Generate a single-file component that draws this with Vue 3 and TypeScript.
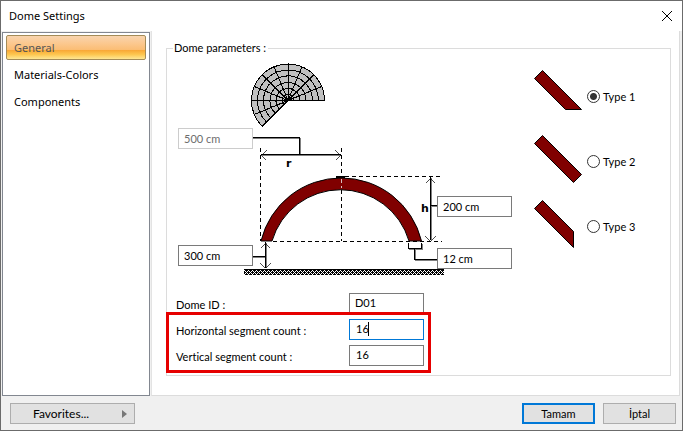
<script setup lang="ts">
import { ref } from 'vue'

const pages = ['General', 'Materials-Colors', 'Components']
const activePage = ref('General')

const radius = ref('500 cm')
const elevation = ref('300 cm')
const height = ref('200 cm')
const thickness = ref('12 cm')
const domeId = ref('D01')
const horizontal = ref('16')
const vertical = ref('16')

const types = [
  { id: 1, label: 'Type 1', points: '0.5,8.5 8.5,0.5 47.5,39.5 31.5,39.5' },
  { id: 2, label: 'Type 2', points: '0.5,8.5 8.5,0.5 47.5,39.5 39.5,47.5' },
  { id: 3, label: 'Type 3', points: '0.5,8.5 8.5,0.5 39.5,31.5 39.5,47.5' },
]
const domeType = ref(1)

const cx = 288
const cy = 100.5
const rings = [6, 12, 18, 24.5, 30.5, 36.5]
const point = (r: number, deg: number): string => {
  const a = (deg * Math.PI) / 180
  return `${(cx + r * Math.cos(a)).toFixed(2)} ${(cy - r * Math.sin(a)).toFixed(2)}`
}
const arc = (r: number): string => `M${point(r, 0)}A${r} ${r} 0 1 0 ${point(r, 225)}`
const fan = `${arc(36.5)}L${cx} ${cy}Z`
const spokes = Array.from({ length: 11 }, (_, i) => `M${cx} ${cy}L${point(36.5, i * 22.5)}`).join('')
</script>

<template>
  <main class="dialog">
    <header class="titlebar">
      <h1>Dome Settings</h1>
      <button class="close" type="button" aria-label="Close">
        <svg width="12" height="12" viewBox="0 0 12 12"><path d="M1 1L11 11M11 1L1 11" /></svg>
      </button>
    </header>

    <div class="body">
      <nav class="sidebar">
        <button
          v-for="page in pages"
          :key="page"
          type="button"
          class="page"
          :class="{ active: page === activePage }"
          @click="activePage = page"
        >{{ page }}</button>
      </nav>

      <section class="panel">
        <fieldset class="group">
          <legend>Dome parameters :</legend>
          <div class="upper">
            <div class="diagram">
              <svg class="drawing" width="353" height="223" viewBox="167 57 353 223" aria-hidden="true">
                <defs>
                  <pattern id="hatch" x="244" y="269" width="4" height="6" patternUnits="userSpaceOnUse">
                    <rect width="4" height="6" fill="#000" />
                    <path
                      d="M0 1h1v1h-1zM1 2h1v1h-1zM3 2h1v1h-1zM2 3h1v1h-1zM1 4h1v1h-1zM3 4h1v1h-1zM0 5h1v1h-1z"
                      fill="#fff"
                    />
                  </pattern>
                </defs>
                <path :d="fan" fill="#c0c0c0" />
                <path v-for="r in rings" :key="r" :d="arc(r)" class="line" />
                <path :d="spokes" class="line" />

                <g class="shadow">
                  <path d="M253 138.5H299M300.5 138V154M262 155.5H341" />
                  <path d="M253 257.5H265M266.5 243V268M431.5 178V240M432 206.5H437" />
                  <path d="M409 249.5H422M422.5 244V250M415.5 250V259M415 260.5H437" />
                </g>
                <path class="dash" d="M260.5 148V241M341.5 148V241M345 176.5H442M273 241.5H442" />
                <path d="M261 241A82.6 82.6 0 0 1 421.5 241H409A71.4 71.4 0 0 0 272 241Z" class="arch" />
                <path class="line" d="M336 176.5H345M336 177.5H345" />
                <path d="M341.5 179V188" stroke="#d8c0c0" stroke-dasharray="4 3" />
                <g class="line">
                  <path d="M253 137.5H299.5V154M261 154.5H341M253 256.5H265.5M265.5 242V268" />
                  <path d="M430.5 177V240M430 205.5H437M408.5 243V248.5H421.5V243M414.5 249V259.5H437" />
                </g>
                <g class="line tips">
                  <path d="M266.5 149.5L261.5 154.5L266.5 159.5M335.5 149.5L340.5 154.5L335.5 159.5" />
                  <path d="M260.5 247.5L265.5 242.5L270.5 247.5M260.5 262.5L265.5 267.5L270.5 262.5" />
                  <path d="M425.5 182.5L430.5 177.5L435.5 182.5M425.5 235.5L430.5 240.5L435.5 235.5" />
                </g>
                <rect x="244" y="269" width="200" height="6" fill="url(#hatch)" />
                <text x="286" y="167">r</text>
                <text x="421" y="212">h</text>
              </svg>
              <input v-model="radius" class="field radius" aria-label="Radius" disabled />
              <input v-model="elevation" class="field elevation" aria-label="Elevation" />
              <input v-model="height" class="field height" aria-label="Height" />
              <input v-model="thickness" class="field thickness" aria-label="Thickness" />
            </div>

            <div class="types">
              <label v-for="t in types" :key="t.id" class="type">
                <svg width="48" height="48" viewBox="0 0 48 48" aria-hidden="true">
                  <polygon :points="t.points" class="arch" />
                </svg>
                <input v-model="domeType" type="radio" name="dome-type" :value="t.id" />
                <span>{{ t.label }}</span>
              </label>
            </div>
          </div>

          <div class="form">
            <label for="dome-id">Dome ID :</label>
            <input id="dome-id" v-model="domeId" class="field" />
            <label for="horizontal">Horizontal segment count :</label>
            <div class="editing">
              <input id="horizontal" v-model="horizontal" class="field current" />
              <i class="caret"></i>
            </div>
            <label for="vertical">Vertical segment count :</label>
            <input id="vertical" v-model="vertical" class="field count" />
            <div class="highlight"></div>
          </div>
        </fieldset>
      </section>
    </div>

    <footer class="footer">
      <button type="button" class="btn favorites">
        <span>Favorites...</span>
        <svg width="5" height="8" viewBox="0 0 5 8"><path d="M0 0L5 4L0 8Z" /></svg>
      </button>
      <button type="button" class="btn primary">Tamam</button>
      <button type="button" class="btn">İptal</button>
    </footer>
  </main>
</template>

<style>
body {
  margin: 0;
}
</style>

<style scoped>
.dialog {
  box-sizing: border-box;
  display: flex;
  flex-direction: column;
  min-height: 100vh;
  border: 1px solid #6b6b6b;
  background: #f0f0f0;
  color: #000;
  font: 11px/16px Lato, "DejaVu Sans Condensed", sans-serif;
  font-variant-ligatures: none;
}
button,
input {
  box-sizing: border-box;
  margin: 0;
  color: inherit;
  font: inherit;
}
.titlebar {
  display: flex;
  align-items: center;
  justify-content: space-between;
  height: 30px;
  padding: 0 9px 0 8px;
  background: #fff;
}
h1 {
  margin: 0;
  font: 11px/16px "Noto Sans", "Open Sans", sans-serif;
}
.close {
  display: flex;
  padding: 0;
  border: 0;
  background: none;
}
.close path {
  fill: none;
  stroke: #000;
}
.body {
  display: flex;
  flex: 1;
  gap: 1px;
  padding: 0 2px 0 1px;
}
.sidebar {
  box-sizing: border-box;
  display: flex;
  flex-direction: column;
  gap: 2px;
  width: 148px;
  margin-top: 1px;
  padding: 2px 3px;
  border: 1px solid #828790;
  background: #fff;
}
.page {
  height: 25px;
  padding: 0 7px;
  border: 1px solid transparent;
  border-radius: 2px;
  background: none;
  font: 11px/16px "Noto Sans", "Open Sans", sans-serif;
  text-align: left;
}
.page.active {
  border-color: #a48b57;
  background: linear-gradient(#f8d4ae 0%, #fcc991 30%, #fbbd74 60%, #f9a836 62%, #fdc64f 80%, #ffe793 100%);
  color: #555;
}
.panel {
  flex: 1;
  padding: 9px 8px 19px 14px;
  border-right: 1px solid #dcdcdc;
  border-bottom: 1px solid #dcdcdc;
  border-left: 1px solid #e3e3e3;
  background: #fff;
}
.group {
  min-width: 0;
  margin: 0;
  padding: 0 0 9px;
  border: 1px solid #dcdcdc;
}
legend {
  margin-left: 6px;
  padding: 0 2px 0 1px;
}
.upper {
  display: flex;
  justify-content: space-between;
  padding-top: 1px;
}
.diagram {
  position: relative;
  width: 353px;
}
.drawing {
  display: block;
}
.line {
  fill: none;
  stroke: #000;
  shape-rendering: crispEdges;
}
.tips {
  stroke-width: 0.7;
}
.shadow {
  fill: none;
  stroke: #808080;
  shape-rendering: crispEdges;
}
.dash {
  fill: none;
  stroke: #000;
  stroke-dasharray: 4 3;
  shape-rendering: crispEdges;
}
.arch {
  fill: #800000;
  stroke: #000;
}
.drawing text {
  font: bold 11px "DejaVu Sans", sans-serif;
}
.field {
  width: 75px;
  height: 21px;
  padding: 0 5px;
  border: 1px solid #7a7a7a;
  outline: 0;
  background: #fff;
}
.field:disabled {
  border-color: #ccc;
  color: #6d6d6d;
}
.diagram .field {
  position: absolute;
}
.radius {
  top: 71px;
  left: 11px;
}
.elevation {
  top: 188px;
  left: 11px;
}
.height {
  top: 139px;
  left: 270px;
}
.thickness {
  top: 191px;
  left: 270px;
}
.types {
  width: 136px;
  margin-top: 13px;
}
.type {
  display: flex;
  height: 65px;
}
.type input {
  appearance: none;
  width: 13px;
  height: 13px;
  margin: 20px 3px 0 5px;
  border: 1px solid #333;
  border-radius: 50%;
  background: #fff;
}
.type input:checked {
  background: radial-gradient(circle, #333 0 3px, #fff 4px);
}
.type span {
  margin-top: 19px;
}
.form {
  position: relative;
  display: grid;
  grid-template-columns: 173px 75px;
  grid-auto-rows: 21px;
  row-gap: 5px;
  align-items: center;
  margin-top: 13px;
  padding-left: 9px;
}
.form label {
  margin-top: 3px;
}
.form .field {
  padding-bottom: 2px;
}
.form .current {
  padding-left: 6px;
  border-color: #0078d7;
}
.form .count {
  padding-left: 6px;
}
.editing {
  position: relative;
  display: flex;
}
.caret {
  position: absolute;
  top: 3px;
  left: 19px;
  width: 1px;
  height: 14px;
  background: #000;
}
.highlight {
  position: absolute;
  top: 19px;
  left: -1px;
  box-sizing: border-box;
  width: 265px;
  height: 61px;
  border: 3px solid #e60000;
  pointer-events: none;
}
.footer {
  display: flex;
  gap: 8px;
  padding: 7px 6px 6px 9px;
}
.btn {
  width: 73px;
  height: 21px;
  padding: 0;
  border: 1px solid #adadad;
  background: #e1e1e1;
}
.favorites {
  display: flex;
  align-items: center;
  justify-content: space-between;
  width: 125px;
  margin-right: auto;
  padding: 0 7px 0 22px;
  font-size: 12px;
}
.favorites path {
  fill: #777;
}
.primary {
  border: 2px solid #0078d7;
}
</style>
